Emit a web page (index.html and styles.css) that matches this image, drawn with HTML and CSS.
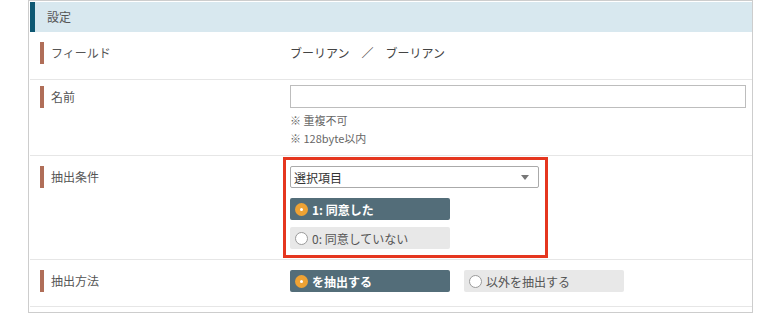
FILE: index.html
```html
<!DOCTYPE html>
<html lang="ja">
<head>
  <meta charset="UTF-8" />
  <meta name="viewport" content="width=device-width, initial-scale=1.0"/>
  <title>設定</title>
  <link rel="stylesheet" href="styles.css">
</head>
<body>

  <div class="panel">
    <div class="panel-head">設定</div>

    <div class="row">
      <div class="label">フィールド</div>
      <div class="value text">ブーリアン　／　ブーリアン</div>
    </div>

    <div class="row row-name">
      <div class="label">名前</div>
      <div class="value">
        <input type="text" class="text-input" />
        <p class="note">※ 重複不可<br>※ 128byte以内</p>
      </div>
    </div>

    <div class="row row-cond">
      <div class="label">抽出条件</div>
      <div class="value cond">
        <div class="select-wrap">
          <select class="select">
            <option>選択項目</option>
          </select>
        </div>
        <label class="radio checked">
          <input type="radio" name="cond" checked />
          <span class="mark"></span>1: 同意した
        </label>
        <label class="radio">
          <input type="radio" name="cond" />
          <span class="mark"></span>0: 同意していない
        </label>
        <div class="highlight"></div>
      </div>
    </div>

    <div class="row row-last">
      <div class="label">抽出方法</div>
      <div class="value radios">
        <label class="radio checked">
          <input type="radio" name="method" checked />
          <span class="mark"></span>を抽出する
        </label>
        <label class="radio">
          <input type="radio" name="method" />
          <span class="mark"></span>以外を抽出する
        </label>
      </div>
    </div>
  </div>

</body>
</html>
```

FILE: styles.css
```css
body {
  margin: 0;
  font-family: "Noto Sans CJK JP", "Noto Sans", sans-serif;
  font-size: 12px;
  color: #444;
  background: #fff;
}

.panel {
  width: 725px;
  margin-left: 28px;
  box-sizing: border-box;
  border: 1px solid #cdcdcd;
  padding: 1px 0 5px 1px;
}

.panel-head {
  height: 30px;
  line-height: 30px;
  background: #d8e8ef;
  border-left: 5px solid #0e5873;
  padding-left: 12px;
  color: #555;
}

.row {
  display: grid;
  grid-template-columns: 250px 456px;
  padding: 10px 0 15px 10px;
  border-bottom: 1px solid #e6e6e6;
}

.label {
  height: 22px;
  line-height: 22px;
  border-left: 4px solid #b06e58;
  padding-left: 7px;
  color: #555;
}

.value.text {
  line-height: 22px;
  color: #444;
}

/* 名前 */
.row-name {
  padding-top: 5px;
  padding-bottom: 8px;
}

.row-name .label {
  margin-top: 1px;
}

.text-input {
  display: block;
  width: 100%;
  height: 23px;
  box-sizing: border-box;
  border: 1px solid #bdbdbd;
  margin: 0;
  padding: 0 5px;
}

.note {
  margin: 3px 0 0;
  font-size: 11px;
  line-height: 18px;
  color: #666;
}

/* 抽出条件 */
.row-cond {
  padding-bottom: 10px;
}

.cond {
  position: relative;
  display: flex;
  flex-direction: column;
  align-items: flex-start;
  gap: 7px;
}

.select-wrap {
  position: relative;
  width: 249px;
  margin-bottom: 3px;
}

.select-wrap::after {
  content: "";
  position: absolute;
  right: 10px;
  top: 9px;
  border-left: 4px solid transparent;
  border-right: 4px solid transparent;
  border-top: 5px solid #777;
}

.select {
  appearance: none;
  display: block;
  width: 100%;
  height: 22px;
  box-sizing: border-box;
  border: 1px solid #aaa;
  border-radius: 2px;
  background: #fff;
  padding: 0 3px;
  font-family: inherit;
  font-size: 12px;
  color: #333;
}

.highlight {
  position: absolute;
  left: -7px;
  top: -9px;
  width: 265px;
  height: 101px;
  box-sizing: border-box;
  border: 3px solid #e5361f;
}

/* radios */
.radios {
  display: flex;
  gap: 14px;
}

.radio {
  display: flex;
  align-items: center;
  width: 160px;
  height: 22px;
  box-sizing: border-box;
  padding-left: 5px;
  border-radius: 2px;
  background: #e8e8e8;
  color: #555;
}

.radio input {
  display: none;
}

.mark {
  width: 13px;
  height: 13px;
  box-sizing: border-box;
  border-radius: 50%;
  border: 1px solid #9a9a9a;
  background: #fff;
  margin-right: 4px;
  position: relative;
}

.radio.checked {
  background: #536d79;
  color: #fff;
  font-weight: bold;
}

.radio.checked .mark {
  border: none;
  background: #eea234;
}

.radio.checked .mark::after {
  content: "";
  position: absolute;
  left: 5px;
  top: 5px;
  width: 3px;
  height: 3px;
  border-radius: 50%;
  background: #fff;
}

.row-last {
  padding-bottom: 14px;
}
```
